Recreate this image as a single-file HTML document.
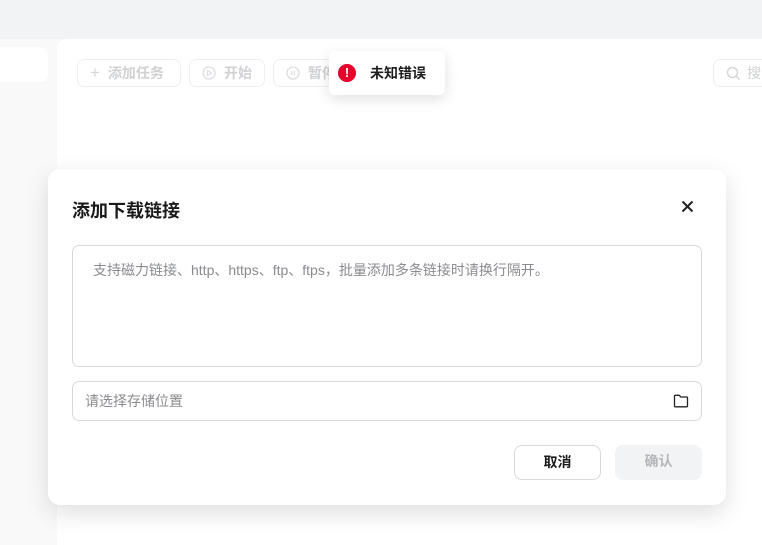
<!DOCTYPE html>
<html><head><meta charset="utf-8"><style>
*{box-sizing:border-box;margin:0;padding:0}
body{width:762px;height:545px;overflow:hidden;position:relative;background:#f9f9fa;font-family:"Liberation Sans","Noto Sans CJK SC",sans-serif}
.top{position:absolute;left:0;top:0;width:762px;height:39px;background:#f2f3f5}
.side{position:absolute;left:0;top:47px;width:48px;height:35px;background:#fff;border-radius:0 8px 8px 0}
.main{position:absolute;left:57px;top:39px;width:705px;height:506px;background:#fff;border-radius:10px 0 0 0}
.tb{position:absolute;top:59px;height:28px;border:1px solid #eeeff1;border-radius:7px;color:#d0d1d3;font-size:14px;font-weight:bold;display:flex;align-items:center;padding-left:12px;gap:8px;white-space:nowrap;overflow:hidden}
.circ{width:14px;height:14px;flex:none}
.toast{position:absolute;left:329px;top:51px;width:116px;height:44px;background:#fff;border-radius:6px;box-shadow:0 4px 14px rgba(0,0,0,.12);display:flex;align-items:center;font-size:14px;font-weight:bold;color:#1d1d1f}
.toast .ic{width:18px;height:18px;border-radius:50%;background:#e5002b;color:#fff;font-size:13px;text-align:center;line-height:18px;margin:0 14px 0 9px;font-weight:900}
.dlg{position:absolute;left:48px;top:169px;width:678px;height:336px;background:#fff;border-radius:12px;box-shadow:0 8px 24px rgba(0,0,0,.13)}
.title{position:absolute;left:24px;top:28px;font-size:18px;font-weight:bold;color:#1a1a1a}
.x{position:absolute;left:633px;top:31px}
.ta{position:absolute;left:24px;top:76px;width:630px;height:122px;border:1px solid #d8d9dc;border-radius:7px;padding:14px 20px;font-size:14px;color:#8a8b8e}
.inp{position:absolute;left:24px;top:212px;width:630px;height:40px;border:1px solid #d8d9dc;border-radius:7px;padding:0 12px;font-size:14px;color:#8a8b8e;line-height:38px}
.inp svg{position:absolute;right:12px;top:12px}
.btn{position:absolute;top:276px;width:87px;height:35px;border-radius:8px;font-size:14px;font-weight:bold;text-align:center;line-height:33px}
</style></head><body>
<div class="top"></div>
<div class="side"></div>
<div class="main"></div>
<div class="tb" style="left:77px;width:104px"><span style="font-size:17px;font-weight:normal;color:#d5d6d8">+</span>添加任务</div>
<div class="tb" style="left:189px;width:76px"><svg class="circ" viewBox="0 0 14 14"><circle cx="7" cy="7" r="6" fill="none" stroke="#dcdde0" stroke-width="1.3"/><path d="M5.5 4.5v5l4-2.5z" fill="none" stroke="#dcdde0" stroke-width="1.1"/></svg>开始</div>
<div class="tb" style="left:273px;width:70px"><svg class="circ" viewBox="0 0 14 14"><circle cx="7" cy="7" r="6" fill="none" stroke="#dcdde0" stroke-width="1.3"/><path d="M5.7 5v4M8.3 5v4" stroke="#dcdde0" stroke-width="1.2"/></svg>暂停</div>
<div class="tb" style="left:713px;width:60px;gap:6px;font-weight:normal"><svg width="15" height="15" viewBox="0 0 15 15" style="flex:none"><circle cx="6.5" cy="6.5" r="5" fill="none" stroke="#d5d6d8" stroke-width="1.4"/><path d="M10 10l3.5 3.5" stroke="#d5d6d8" stroke-width="1.4"/></svg>搜索</div>
<div class="toast"><span class="ic">!</span>未知错误</div>
<div class="dlg">
<div class="title">添加下载链接</div>
<svg class="x" width="13" height="13" viewBox="0 0 13 13"><path d="M1.5 1.5l10 10M11.5 1.5l-10 10" stroke="#222" stroke-width="2"/></svg>
<div class="ta">支持磁力链接、http、https、ftp、ftps，批量添加多条链接时请换行隔开。</div>
<div class="inp">请选择存储位置<svg width="16" height="14" viewBox="0 0 16 14"><path d="M1.5 2.2q0-.9.9-.9h3.8l1.6 1.7h5.8q.9 0 .9.9v8q0 .9-.9.9H2.4q-.9 0-.9-.9z" fill="none" stroke="#222" stroke-width="1.3"/></svg></div>
<div class="btn" style="left:466px;border:1px solid #d8d9dc;color:#1a1a1a">取消</div>
<div class="btn" style="left:567px;background:#f2f3f5;color:#b5b6b9">确认</div>
</div>
</body></html>
